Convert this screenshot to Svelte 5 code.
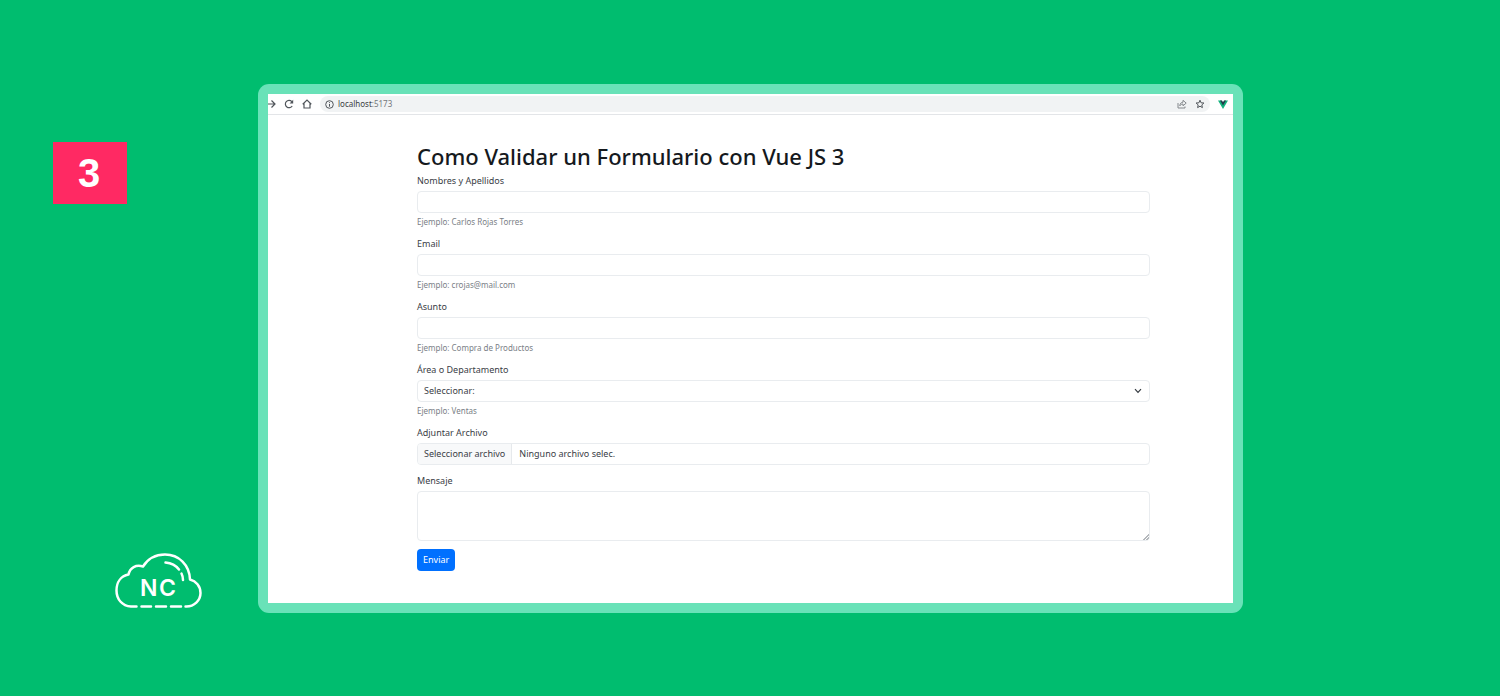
<script>
  const textFields = [
    { id: 'nombres', label: 'Nombres y Apellidos', type: 'text', hint: 'Ejemplo: Carlos Rojas Torres' },
    { id: 'email', label: 'Email', type: 'email', hint: 'Ejemplo: crojas@mail.com' },
    { id: 'asunto', label: 'Asunto', type: 'text', hint: 'Ejemplo: Compra de Productos' }
  ];
  let fileName = $state('Ninguno archivo selec.');

  function pickFile(event) {
    fileName = event.currentTarget.files[0]?.name ?? 'Ninguno archivo selec.';
  }
</script>

<main class="slide">
  <aside class="rail">
    <div class="step">3</div>
    <svg class="logo" viewBox="0 0 88 56" role="img" aria-label="NC">
      <g fill="none" stroke="#fff" stroke-width="2.5" stroke-linecap="round" stroke-linejoin="round">
        <path d="M21.500 53.500H16C7 53 1.500 46 1.500 37.500C1.500 29 6 23 13.500 21.500C15 14.500 21 11.500 28 13.500C33 5.500 41 1.500 50 1.500C64 1.500 74.500 12 75 26.500C81 28 85.500 33 85.500 40C85.500 47.500 79 53.500 71.500 53.500H70.500" />
        <path d="M26.500 53.500H36M41 53.500H51M56 53.500H66" />
        <path d="M50.500 9.500C56.500 10 61 12.500 64 16.500M66.500 20.500C67.500 22.500 68 24.500 68 27" />
      </g>
      <text x="25 44" y="43">NC</text>
    </svg>
  </aside>

  <section class="frame">
    <div class="browser">
      <header class="toolbar">
        <button class="forward" aria-label="Adelante">
          <svg width="8" height="10" viewBox="0 0 8 10"><path d="M0 5H7M3.500 1.500L7 5L3.500 8.500" /></svg>
        </button>
        <button aria-label="Recargar">
          <svg width="10" height="10" viewBox="0 0 10 10"><path d="M8.200 7A3.700 3.700 0 1 1 7.700 2.400L8.500 3.300" /><path class="solid" d="M9.200 .8V4.400H5.600Z" /></svg>
        </button>
        <button aria-label="Inicio">
          <svg width="10" height="10" viewBox="0 0 10 10"><path d="M.7 5.200L5 1.100L9.300 5.200M2 4.500V9H8V4.500" /></svg>
        </button>
        <div class="address">
          <svg width="9" height="9" viewBox="0 0 9 9"><circle cx="4.500" cy="4.500" r="3.800" /><path d="M4.500 4V6.700M4.500 2.200V3.100" /></svg>
          <span class="url">localhost<span class="port">:5173</span></span>
          <button class="share" aria-label="Compartir">
            <svg width="10" height="10" viewBox="0 0 10 10"><path d="M1 4V9H8V7.500M2.800 6.800C3 4.400 4.200 3.300 6 3.200V1.300L9.200 4.100L6 6.800V5C4.700 5 3.700 5.500 2.800 6.800Z" /></svg>
          </button>
          <button aria-label="Marcar">
            <svg width="10" height="10" viewBox="0 0 10 10"><path d="M5 1.200L6.100 3.800L8.900 4L6.800 5.900L7.400 8.600L5 7.200L2.600 8.600L3.200 5.900L1.100 4L3.900 3.800Z" /></svg>
          </button>
        </div>
        <button class="vue" aria-label="Vue">
          <svg width="10" height="9" viewBox="0 0 10 9"><path fill="#12b27d" d="M0 .5H3.500L5 3L6.500 .5H10L5 9Z" /><path fill="#243a4b" d="M2 .5H4L5 2.200L6 .5H8L5 5.500Z" /></svg>
        </button>
      </header>

      <div class="page">
        <h1>Como Validar un Formulario con Vue JS 3</h1>
        <form onsubmit={(event) => event.preventDefault()}>
          {#each textFields as field (field.id)}
            <div class="group">
              <label for={field.id}>{field.label}</label>
              <input class="control" id={field.id} type={field.type} />
              <small>{field.hint}</small>
            </div>
          {/each}

          <div class="group">
            <label for="area">Área o Departamento</label>
            <div class="select">
              <select class="control" id="area">
                <option>Seleccionar:</option>
                <option>Ventas</option>
              </select>
              <svg width="8" height="6" viewBox="0 0 8 6"><path d="M1 1.200L4 4.300L7 1.200" /></svg>
            </div>
            <small>Ejemplo: Ventas</small>
          </div>

          <div class="group">
            <label for="archivo">Adjuntar Archivo</label>
            <label class="control file" for="archivo">
              <span class="choose">Seleccionar archivo</span>
              <span class="chosen">{fileName}</span>
              <input id="archivo" type="file" onchange={pickFile} />
            </label>
          </div>

          <div class="group">
            <label for="mensaje">Mensaje</label>
            <textarea class="control" id="mensaje"></textarea>
          </div>

          <button class="submit" type="submit">Enviar</button>
        </form>
      </div>
    </div>
  </section>
</main>

<style>
  :global(body) {
    margin: 0;
    background: #00bd6f;
  }
  * {
    box-sizing: border-box;
  }
  .slide {
    display: grid;
    grid-template-columns: 258px minmax(0, 1fr);
    min-height: 100vh;
    padding: 84px 257px 83px 0;
    font-family: "Noto Sans", "Open Sans", sans-serif;
    font-size: 9px;
    color: #3a4046;
  }
  .rail {
    display: flex;
    flex-direction: column;
    justify-content: space-between;
    padding: 58px 55px 4px 53px;
  }
  .step {
    display: grid;
    place-items: center;
    width: 74px;
    height: 62px;
    padding-right: 2px;
    background: #ff2963;
    color: #fff;
    font: bold 40px/62px "Liberation Sans", sans-serif;
  }
  .logo {
    align-self: flex-end;
    width: 88px;
    height: 56px;
  }
  .logo text {
    fill: #fff;
    font: 600 23px Inter, sans-serif;
  }
  .frame {
    display: flex;
    padding: 10px;
    border-radius: 11px;
    background: #69e2b8;
  }
  .browser {
    flex: 1;
    min-width: 0;
    background: #fff;
    overflow: hidden;
  }
  button {
    border: 0;
    padding: 0;
    background: none;
    font: inherit;
    cursor: pointer;
  }
  .toolbar {
    display: flex;
    align-items: center;
    gap: 8px;
    height: 21px;
    padding-right: 5px;
    border-bottom: 1px solid #e3e5e8;
  }
  .toolbar button {
    display: flex;
  }
  .toolbar svg {
    fill: none;
    stroke: #50555a;
    stroke-width: 1.2px;
  }
  .toolbar .solid {
    fill: #50555a;
    stroke: none;
  }
  .toolbar .vue svg {
    stroke: none;
  }
  .address {
    display: flex;
    flex: 1;
    align-items: center;
    gap: 8px;
    height: 16px;
    padding: 0 5px;
    border-radius: 8px;
    background: #f1f3f4;
  }
  .address svg {
    stroke-width: 1px;
  }
  .address .share svg {
    stroke: #85898d;
  }
  .url {
    margin-left: -4px;
    font-size: 8px;
    line-height: 16px;
    color: #3c4043;
  }
  .port {
    color: #73777b;
  }
  .share {
    margin-left: auto;
  }
  .page {
    padding: 27px 83px 32px 149px;
  }
  h1 {
    margin: 0 0 4px;
    font-size: 22px;
    font-weight: 500;
    line-height: 28px;
    color: #15191d;
  }
  .group {
    display: flex;
    flex-direction: column;
    margin-bottom: 8px;
  }
  label {
    margin-bottom: 3px;
    line-height: 14px;
  }
  small {
    margin-top: 3px;
    margin-bottom: 1px;
    font-size: 8px;
    line-height: 12px;
    color: #7a8086;
  }
  .control {
    display: block;
    width: 100%;
    height: 22px;
    margin: 0;
    padding: 0 6px;
    border: 1px solid #e9ecef;
    border-radius: 4px;
    background: #fff;
    color: #3a4046;
    font: inherit;
    line-height: 20px;
  }
  .select {
    display: grid;
    align-items: center;
  }
  .select > * {
    grid-area: 1 / 1;
  }
  .select select {
    appearance: none;
  }
  .select svg {
    justify-self: end;
    margin-right: 8px;
    fill: none;
    stroke: #343a40;
    stroke-width: 1.2px;
    pointer-events: none;
  }
  .file {
    position: relative;
    display: flex;
    margin-bottom: 1px;
    padding: 0;
    overflow: hidden;
    cursor: pointer;
  }
  .choose {
    padding: 0 6px;
    border-right: 1px solid #e6e9ec;
    background: #f8f9fa;
  }
  .chosen {
    padding: 0 7px;
  }
  .file input {
    position: absolute;
    inset: 0;
    opacity: 0;
  }
  textarea.control {
    height: 50px;
    resize: vertical;
  }
  textarea::-webkit-resizer {
    background: linear-gradient(135deg, transparent 79%, #b4b8bc 79% 84%, transparent 84% 89%, #b4b8bc 89% 95%, transparent 95%);
  }
  .submit {
    height: 22px;
    padding: 0 6px;
    border-radius: 4px;
    background: #0070ff;
    color: #fff;
    line-height: 22px;
  }
</style>
